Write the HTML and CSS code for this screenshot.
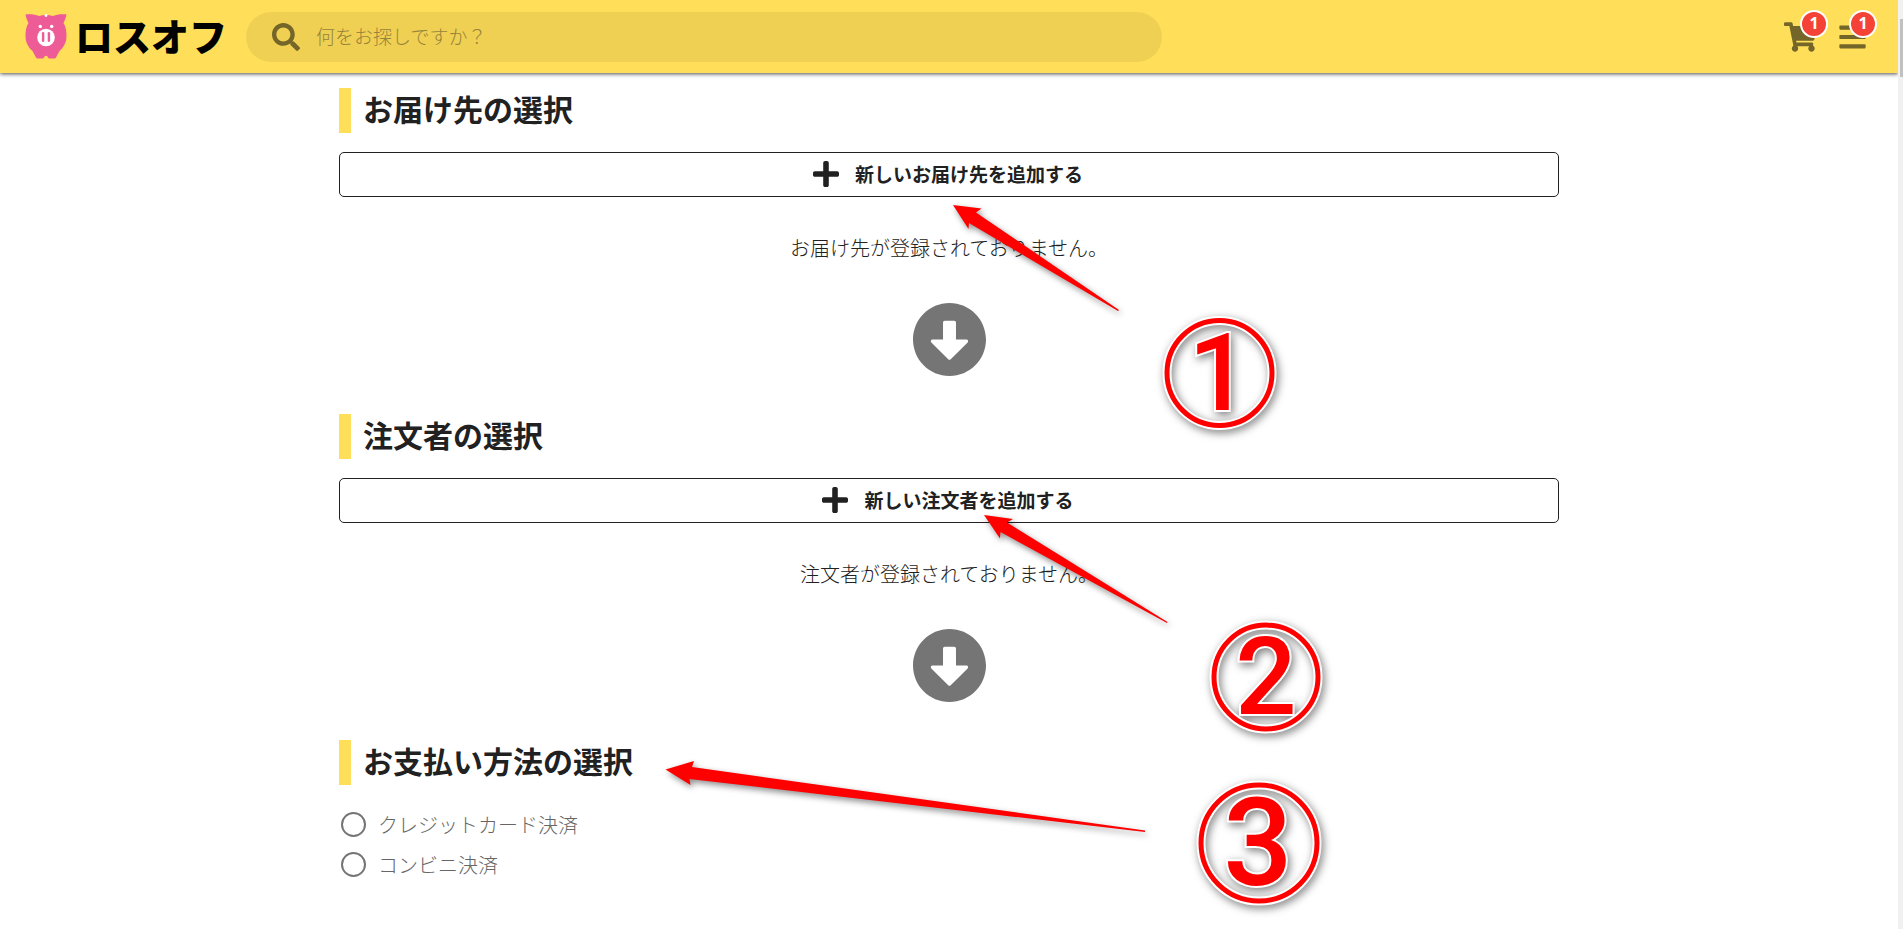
FILE: index.html
```html
<!DOCTYPE html>
<html lang="ja">
<head>
    <meta charset="utf-8">
    <title>ロスオフ</title>
    <link rel="stylesheet" href="styles.css">
</head>
<body>
    <header class="header">
        <a class="logo" href="#">
            <svg class="logo-pig" viewBox="0 0 42 45" aria-hidden="true">
                <path fill="#ee5c97" d="M1 0.300C5 0 10 0 14 2C18 0.500 24 0.500 28 2C32 0 37 0 41 0.300C42 1 40 6 38.500 9C41 13 41.500 17 41.500 22C41.500 29 38 34 34.500 37L31 43.500Q30.500 44.500 29.500 44.500H24.500Q23 44.500 22.500 42.500Q21 41 19.500 42.500Q19 44.500 17.500 44.500H12.500Q11.500 44.500 11 43.500L7.500 37C4 34 0.500 29 0.500 22C0.500 17 1 13 3.500 9C2 6 0 1 1 0.300Z"/>
                <circle cx="21" cy="1.500" r="1.400" fill="#fff"/>
                <circle cx="15.300" cy="12.500" r="1.700" fill="#fff"/>
                <circle cx="26.700" cy="12.500" r="1.700" fill="#fff"/>
                <circle cx="21" cy="23.500" r="8.800" fill="#fff"/>
                <rect x="16.900" y="18" width="2.400" height="10" rx="1.200" fill="#ee5c97"/>
                <rect x="22.700" y="18" width="2.400" height="10" rx="1.200" fill="#ee5c97"/>
            </svg>
            <span class="logo-text">ロスオフ</span>
        </a>
        <form class="search">
            <svg class="search-icon" viewBox="0 0 512 512" aria-hidden="true"><path d="M505 442.7L405.3 343c-4.5-4.5-10.6-7-17-7H372c27.6-35.3 44-79.7 44-128C416 93.1 322.9 0 208 0S0 93.1 0 208s93.1 208 208 208c48.3 0 92.7-16.4 128-44v16.3c0 6.4 2.5 12.5 7 17l99.7 99.7c9.4 9.4 24.6 9.4 33.9 0l28.3-28.3c9.4-9.4 9.4-24.6.1-34zM208 336c-70.7 0-128-57.2-128-128 0-70.7 57.2-128 128-128 70.7 0 128 57.2 128 128 0 70.7-57.2 128-128 128z"/></svg>
            <input class="search-input" type="text" placeholder="何をお探しですか？" aria-label="商品検索">
        </form>
        <div class="header-actions">
            <button class="icon-btn" type="button" aria-label="カート">
                <svg class="cart-icon" viewBox="0 0 576 512" aria-hidden="true"><path d="M528.12 301.319l47.273-208C578.806 78.301 567.391 64 551.99 64H159.208l-9.166-44.81C147.758 8.021 137.93 0 126.529 0H24C10.745 0 0 10.745 0 24v16c0 13.255 10.745 24 24 24h69.883l70.248 343.435C147.325 417.1 136 435.222 136 456c0 30.928 25.072 56 56 56s56-25.072 56-56c0-15.674-6.447-29.835-16.824-40h209.647C430.447 426.165 424 440.326 424 456c0 30.928 25.072 56 56 56s56-25.072 56-56c0-22.172-12.888-41.332-31.579-50.405l5.517-24.276c3.413-15.018-8.002-29.319-23.403-29.319H218.117l-6.545-32h293.145c11.206 0 20.92-7.754 23.403-18.681z"/></svg>
                <span class="badge">1</span>
            </button>
            <button class="icon-btn" type="button" aria-label="メニュー">
                <svg class="menu-icon" viewBox="0 0 448 512" aria-hidden="true"><path d="M16 132h416c8.837 0 16-7.163 16-16V76c0-8.837-7.163-16-16-16H16C7.163 60 0 67.163 0 76v40c0 8.837 7.163 16 16 16zm0 160h416c8.837 0 16-7.163 16-16v-40c0-8.837-7.163-16-16-16H16c-8.837 0-16 7.163-16 16v40c0 8.837 7.163 16 16 16zm0 160h416c8.837 0 16-7.163 16-16v-40c0-8.837-7.163-16-16-16H16c-8.837 0-16 7.163-16 16v40c0 8.837 7.163 16 16 16z"/></svg>
                <span class="badge">1</span>
            </button>
        </div>
    </header>

    <main class="container">
        <section class="step">
            <h2 class="step-title">お届け先の選択</h2>
            <button class="add-btn" type="button">
                <svg class="plus-icon" viewBox="0 0 448 512" aria-hidden="true"><path d="M416 208H272V64c0-17.67-14.33-32-32-32h-32c-17.67 0-32 14.33-32 32v144H32c-17.67 0-32 14.33-32 32v32c0 17.67 14.33 32 32 32h144v144c0 17.67 14.33 32 32 32h32c17.67 0 32-14.33 32-32V304h144c17.67 0 32-14.33 32-32v-32c0-17.67-14.33-32-32-32z"/></svg>
                <span>新しいお届け先を追加する</span>
            </button>
            <p class="empty">お届け先が登録されておりません。</p>
            <svg class="next-icon" viewBox="8 8 496 496" aria-hidden="true"><path d="M504 256c0 137-111 248-248 248S8 393 8 256 119 8 256 8s248 111 248 248zM212 140v116h-70.9c-10.7 0-16.1 13-8.5 20.5l114.9 114.3c4.7 4.7 12.2 4.7 16.9 0l114.9-114.3c7.6-7.6 2.2-20.5-8.5-20.5H300V140c0-6.6-5.4-12-12-12h-64c-6.6 0-12 5.4-12 12z"/></svg>
        </section>

        <section class="step">
            <h2 class="step-title">注文者の選択</h2>
            <button class="add-btn" type="button">
                <svg class="plus-icon" viewBox="0 0 448 512" aria-hidden="true"><path d="M416 208H272V64c0-17.67-14.33-32-32-32h-32c-17.67 0-32 14.33-32 32v144H32c-17.67 0-32 14.33-32 32v32c0 17.67 14.33 32 32 32h144v144c0 17.67 14.33 32 32 32h32c17.67 0 32-14.33 32-32V304h144c17.67 0 32-14.33 32-32v-32c0-17.67-14.33-32-32-32z"/></svg>
                <span>新しい注文者を追加する</span>
            </button>
            <p class="empty">注文者が登録されておりません。</p>
            <svg class="next-icon" viewBox="8 8 496 496" aria-hidden="true"><path d="M504 256c0 137-111 248-248 248S8 393 8 256 119 8 256 8s248 111 248 248zM212 140v116h-70.9c-10.7 0-16.1 13-8.5 20.5l114.9 114.3c4.7 4.7 12.2 4.7 16.9 0l114.9-114.3c7.6-7.6 2.2-20.5-8.5-20.5H300V140c0-6.6-5.4-12-12-12h-64c-6.6 0-12 5.4-12 12z"/></svg>
        </section>

        <section class="step">
            <h2 class="step-title">お支払い方法の選択</h2>
            <div class="payment">
                <label class="radio"><input type="radio" name="payment" value="card">クレジットカード決済</label>
                <label class="radio"><input type="radio" name="payment" value="cvs">コンビニ決済</label>
            </div>
        </section>

        <!-- guide arrows and step numbers -->
        <svg class="guide" viewBox="339 73 1220 856">
            <g class="arrow">
                <path d="M953 205L981.500 208.500L976 212.500L1119 310L1118 311L969 223L968.500 229Z"/>
                <path d="M984 515L1013 519L1007 522.500L1167.500 622L1167 623L1000.500 532L1000 538.500Z"/>
                <path d="M665.500 769.500L694 761L692 767L1145 830.500V832L689.500 779L690.500 785Z"/>
            </g>
            <g class="mark">
                <circle class="ring-edge" cx="1219.500" cy="373" r="52.500"/>
                <circle class="ring" cx="1219.500" cy="373" r="52.500"/>
                <text class="num" x="1219" y="410">1</text>
            </g>
            <g class="mark">
                <circle class="ring-edge" cx="1266" cy="677" r="52"/>
                <circle class="ring" cx="1266" cy="677" r="52"/>
                <text class="num" x="1266" y="714">2</text>
            </g>
            <g class="mark">
                <circle class="ring-edge" cx="1259" cy="843" r="58"/>
                <circle class="ring" cx="1259" cy="843" r="58"/>
                <text class="num num-lg" x="1258" y="885">3</text>
            </g>
        </svg>
    </main>

    <div class="scrollbar"><div class="scrollbar-thumb"></div></div>
</body>
</html>
```
FILE: styles.css
```css
* { box-sizing: border-box; }
body { min-height: 100vh; margin: 0; padding-right: 5px; background: #fff; color: #212121; font-family: "Noto Sans CJK JP", sans-serif; font-size: 20px; font-weight: 300; }
button, input { font-family: inherit; color: inherit; }

/* header */
.header { display: flex; align-items: center; height: 73px; padding: 0 32px 0 25px; background: #ffde59; box-shadow: 0 1px 4px rgba(0, 0, 0, 0.7); }
.logo { display: flex; align-items: center; gap: 8px; margin-right: 19px; color: #000; text-decoration: none; }
.logo-pig { width: 42px; height: 45px; }
.logo-text { padding-bottom: 3px; font-size: 38px; line-height: 42px; font-weight: 900; }
.search { display: flex; flex: 0 1 916px; align-items: center; gap: 16px; height: 50px; padding: 0 26px; border-radius: 25px; background: rgba(0, 0, 0, 0.06); }
.search-icon { width: 28px; height: 28px; fill: #746528; }
.search-input { flex: 1; height: 40px; padding: 0 0 3px; border: 0; outline: 0; background: none; font-size: 19px; font-weight: 300; }
.search-input::placeholder { color: #96843a; opacity: 1; }
.header-actions { display: flex; gap: 22px; margin-left: auto; }
.icon-btn { position: relative; display: flex; align-items: center; height: 30px; padding: 0; border: 0; background: none; cursor: pointer; }
.icon-btn svg { fill: #746528; }
.cart-icon { width: 33px; height: 30px; }
.menu-icon { width: 27px; height: 30px; }
.badge { position: absolute; top: -12px; right: -11px; width: 28px; height: 28px; border: 2px solid #fff; border-radius: 50%; background: #f44336; color: #fff; font: 700 16px/23px "Noto Sans", sans-serif; text-align: center; }

/* steps */
.container { position: relative; max-width: 1220px; margin: 0 auto; padding: 15px 0 46px; }
.step-title { margin: 0 0 19px; padding: 0 0 4px 12px; border-left: 12px solid #ffde59; font-size: 30px; line-height: 41px; font-weight: 700; }
.add-btn { display: flex; align-items: center; justify-content: center; gap: 16px; width: 100%; height: 45px; padding: 0 2px 2px 0; border: 1px solid #212121; border-radius: 5px; background: #fff; font-size: 19px; line-height: 28px; font-weight: 700; cursor: pointer; }
.plus-icon { width: 26px; height: 30px; fill: #212121; }
.empty { margin: 36px 0 40px; line-height: 30px; text-align: center; }
.next-icon { display: block; width: 73px; height: 73px; margin: 0 auto 38px; fill: #757575; }
.payment { display: flex; flex-direction: column; align-items: flex-start; }
.radio { display: flex; align-items: center; gap: 12px; height: 40px; padding-left: 2px; color: #666; cursor: pointer; }
.radio input { appearance: none; width: 25px; height: 25px; margin: 0; border: 2px solid #757575; border-radius: 50%; }
.radio input:checked { background: radial-gradient(#757575 45%, #fff 50%); }

/* guide */
.guide { position: absolute; top: 0; left: 0; width: 100%; pointer-events: none; }
.arrow { fill: #f00; filter: drop-shadow(2px 3px 3px rgba(0, 0, 0, 0.45)); }
.mark { filter: drop-shadow(2px 3px 4px rgba(0, 0, 0, 0.5)); }
.ring-edge { fill: none; stroke: #fff; stroke-width: 9px; }
.ring { fill: none; stroke: #f00; stroke-width: 5px; }
.num { fill: #f00; stroke: #fff; stroke-width: 4px; paint-order: stroke; font-family: Roboto, sans-serif; font-size: 108px; font-weight: 500; text-anchor: middle; }
.num-lg { font-size: 122px; }

/* scrollbar */
.scrollbar { position: fixed; top: 0; right: 0; width: 5px; height: 100%; padding: 19px 0 0 2px; background: #f1f1f1; }
.scrollbar-thumb { height: 58px; background: #c1c1c1; }
```
